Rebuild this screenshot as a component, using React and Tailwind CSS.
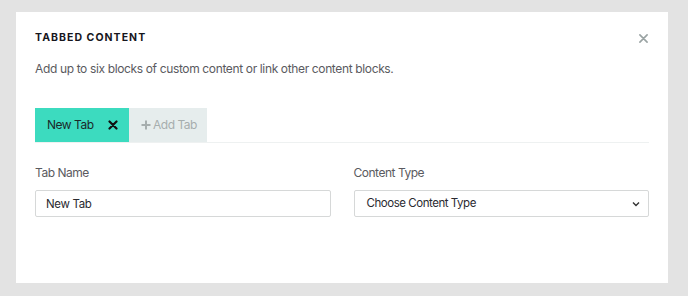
import React from "react";

export default function App() {
  return (
    <div className="w-[688px] h-[296px] bg-[#e3e3e3] pt-[12px] pl-[16px]" style={{ fontFamily: "Inter, 'Noto Sans', sans-serif" }}>
      <div className="w-[652px] h-[271px] bg-white px-[19px] pt-[18px] relative">
        <div className="flex items-center justify-between h-[16px]">
          <div className="text-[10.5px] font-bold tracking-[0.1em] text-[#16161d]">TABBED CONTENT</div>
          <svg width="9" height="9" viewBox="0 0 10 10" className="mr-[1px]">
            <path d="M1 1L9 9M9 1L1 9" stroke="#9aa3a3" strokeWidth="1.8" strokeLinecap="round" />
          </svg>
        </div>
        <div className="mt-[13px] text-[12px] leading-[20px] text-[#5a5a60] tracking-[-0.03em]">
          Add up to six blocks of custom content or link other content blocks.
        </div>
        <div className="mt-[29px] flex border-b border-[#eef1f1]">
          <div className="h-[34px] w-[94px] bg-[#3cdbbf] flex items-center justify-between pl-[12px] pr-[11px] text-[12px] text-[#1b2a2a]">
            <span className="tracking-[-0.04em]">New Tab</span>
            <svg width="10" height="10" viewBox="0 0 10 10">
              <path d="M1.5 1.5L8.5 8.5M8.5 1.5L1.5 8.5" stroke="#111" strokeWidth="2.2" strokeLinecap="round" />
            </svg>
          </div>
          <div className="h-[34px] w-[78px] bg-[#e6eded] flex items-center pl-[12px] text-[12px] text-[#a6aeae]">
            <svg width="10" height="10" viewBox="0 0 10 10" className="mr-[2px]">
              <path d="M5 0.5V9.5M0.5 5H9.5" stroke="#a6aeae" strokeWidth="2" />
            </svg>
            <span className="tracking-[-0.04em]">Add Tab</span>
          </div>
        </div>
        <div className="mt-[21px] grid grid-cols-2 gap-[23px]">
          <div>
            <div className="text-[12px] leading-[18px] text-[#5a5a60] tracking-[-0.04em]">Tab Name</div>
            <input
              readOnly
              value="New Tab"
              className="mt-[8px] w-full h-[27px] border border-[#d6d8d8] rounded-[2px] px-[10px] text-[11.5px] text-[#2a2a30] outline-none tracking-[-0.03em]"
              style={{ fontFamily: "Inter, 'Noto Sans', sans-serif" }}
            />
          </div>
          <div>
            <div className="text-[12px] leading-[18px] text-[#5a5a60] tracking-[-0.04em]">Content Type</div>
            <div className="mt-[8px] w-full h-[27px] border border-[#d6d8d8] rounded-[2px] pl-[12px] pr-[8px] flex items-center justify-between">
              <span className="text-[11.5px] text-[#2a2a30] tracking-[-0.04em]">Choose Content Type</span>
              <svg width="8" height="6" viewBox="0 0 8 6">
                <path d="M1 1.5L4 4.5L7 1.5" stroke="#333" strokeWidth="1.4" fill="none" />
              </svg>
            </div>
          </div>
        </div>
      </div>
    </div>
  );
}
